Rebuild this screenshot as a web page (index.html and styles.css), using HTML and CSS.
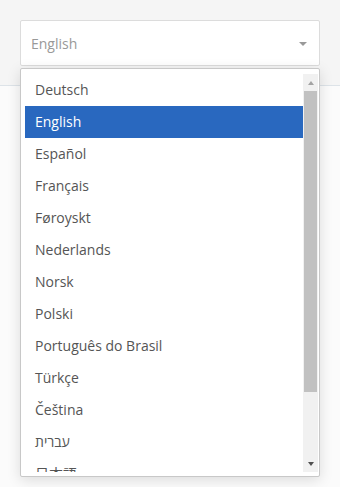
FILE: index.html
```html
<!DOCTYPE html>
<html lang="en">
<head>
    <meta charset="UTF-8">
    <meta name="viewport" content="width=device-width, initial-scale=1.0">
    <title>Language</title>
    <link rel="stylesheet" href="styles.css">
</head>
<body>
    <div class="header">
        <div class="picker">
            <div class="select">
                <span class="select-value">English</span>
                <span class="caret"></span>
            </div>
            <div class="dropdown">
                <ul class="options">
                    <li>Deutsch</li>
                    <li class="selected">English</li>
                    <li>Español</li>
                    <li>Français</li>
                    <li>Føroyskt</li>
                    <li>Nederlands</li>
                    <li>Norsk</li>
                    <li>Polski</li>
                    <li>Português do Brasil</li>
                    <li>Türkçe</li>
                    <li>Čeština</li>
                    <li>עברית</li>
                    <li>日本語</li>
                </ul>
                <div class="scrollbar">
                    <div class="scroll-btn"><span class="arrow-up"></span></div>
                    <div class="thumb"></div>
                    <div class="track"></div>
                    <div class="scroll-btn"><span class="arrow-down"></span></div>
                </div>
            </div>
        </div>
    </div>
    <div class="main"></div>
</body>
</html>
```

FILE: styles.css
```css
body {
    margin: 0;
    min-height: 100vh;
    display: flex;
    flex-direction: column;
    font-family: 'Open Sans', 'Noto Sans CJK JP', sans-serif;
    font-size: 14px;
    background: #fbfbfb;
    color: #555555;
}
.header {
    height: 86px;
    flex-shrink: 0;
    padding: 20px 20px 0;
    box-sizing: border-box;
    background: #f5f5f5;
    border-bottom: 1px solid #dde3e8;
    position: relative;
    z-index: 2;
}
.main {
    flex: 1;
    background: #fbfbfb;
}
.picker {
    position: relative;
}
.select {
    height: 46px;
    box-sizing: border-box;
    display: flex;
    align-items: center;
    justify-content: space-between;
    padding: 0 12px 0 10px;
    background: #ffffff;
    border: 1px solid #dcdcdc;
    border-radius: 2px;
    color: #999999;
}
.caret {
    width: 0;
    height: 0;
    border-left: 4px solid transparent;
    border-right: 4px solid transparent;
    border-top: 4px solid #999999;
    margin-top: 2px;
}
.dropdown {
    position: absolute;
    z-index: 10;
    top: 48px;
    left: 0;
    right: 0;
    height: 409px;
    box-sizing: border-box;
    display: flex;
    padding: 5px 1px 4px 4px;
    background: #ffffff;
    border: 1px solid #c8c8c8;
    border-radius: 2px;
    box-shadow: 0 3px 14px rgba(0, 0, 0, 0.13);
}
.options {
    flex: 1;
    margin: 0;
    padding: 0;
    list-style: none;
    overflow: hidden;
}
.options li {
    height: 32px;
    line-height: 32px;
    padding-left: 10px;
    white-space: nowrap;
}
.options li.selected {
    background: #2968bf;
    color: #ffffff;
}
.scrollbar {
    width: 15px;
    display: flex;
    flex-direction: column;
    background: #f1f1f1;
}
.scroll-btn {
    height: 17px;
    flex-shrink: 0;
    display: flex;
    align-items: center;
    justify-content: center;
}
.arrow-up,
.arrow-down {
    width: 0;
    height: 0;
    border-left: 3.5px solid transparent;
    border-right: 3.5px solid transparent;
}
.arrow-up {
    border-bottom: 4px solid #a3a3a3;
}
.arrow-down {
    border-top: 4px solid #505050;
}
.thumb {
    height: 301px;
    flex-shrink: 0;
    margin: 0 1px;
    background: #c1c1c1;
}
.track {
    flex: 1;
}
```
